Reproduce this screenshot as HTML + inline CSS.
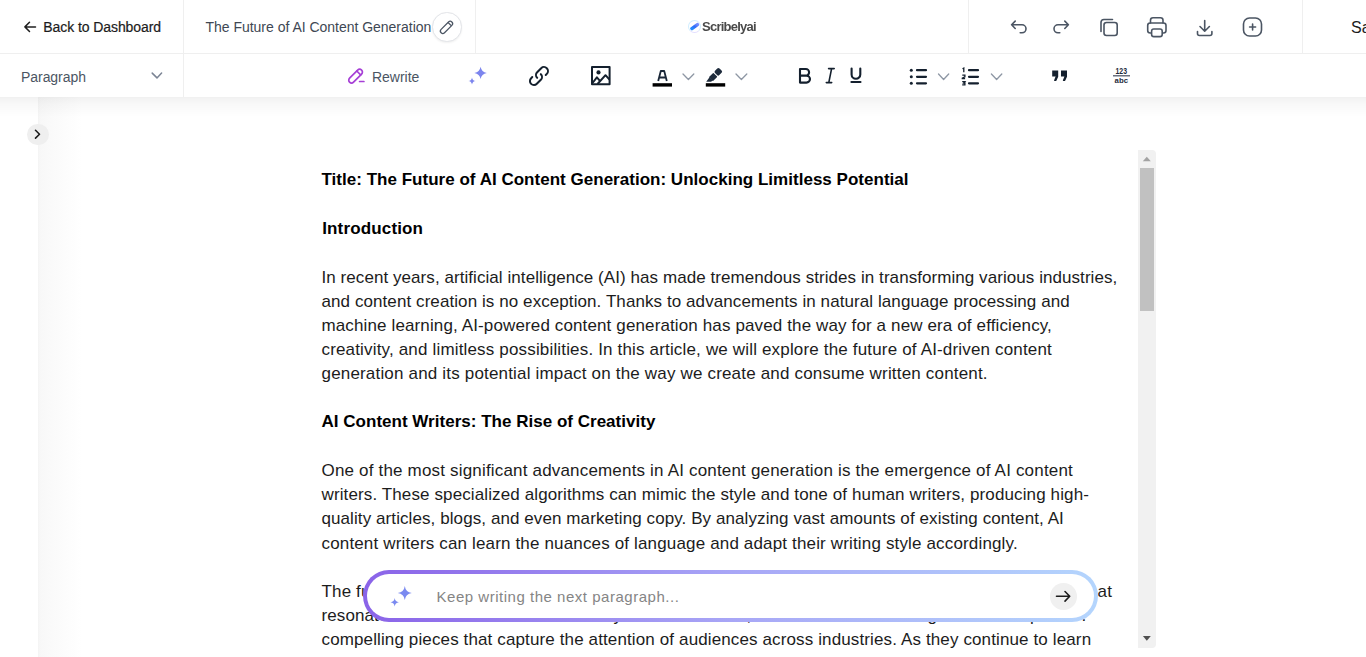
<!DOCTYPE html>
<html><head><meta charset="utf-8">
<style>
*{box-sizing:border-box;margin:0;padding:0}
html,body{width:1366px;height:657px;overflow:hidden;background:#fff;font-family:"Liberation Sans",sans-serif}
.abs{position:absolute}
.vl{position:absolute;width:1px;background:#efefef}
.hl{position:absolute;height:1px;background:#efefef}
.ui{position:absolute;white-space:nowrap;line-height:1}
svg{position:absolute;overflow:visible}
.doc{position:absolute;left:321.5px;top:0;white-space:nowrap;font-size:17px;color:#1c1c1c;line-height:24.2px}
.doc div{position:absolute;left:0;white-space:nowrap}
.doc .b{font-weight:700;color:#000}
</style></head><body>

<!-- toolbar shadow -->
<!-- sidebar shadow -->
<div class="abs" style="left:38px;top:97px;width:44px;height:560px;background:linear-gradient(90deg,#f4f4f4,#f8f8f8 6%,#fafafa 30%,#fcfcfc 60%,#fff)"></div>
<div class="abs" style="left:0;top:97px;width:1366px;height:20px;background:linear-gradient(rgba(0,0,0,0.06),rgba(0,0,0,0.045) 12%,rgba(0,0,0,0.025) 40%,rgba(0,0,0,0.01) 70%,rgba(0,0,0,0))"></div>


<!-- header borders -->
<div class="hl" style="left:0;top:53px;width:1366px"></div>
<div class="vl" style="left:183px;top:0;height:97px"></div>
<div class="vl" style="left:475px;top:0;height:53px"></div>
<div class="vl" style="left:968px;top:0;height:53px"></div>
<div class="vl" style="left:1302px;top:0;height:53px"></div>

<!-- back -->
<svg style="left:0;top:0" width="1" height="1"><path d="M35.5 26.9H25M29.5 22.3l-4.6 4.6 4.6 4.6" fill="none" stroke="#1f1f1f" stroke-width="1.5" stroke-linecap="round" stroke-linejoin="round"/></svg>
<div class="ui" style="left:43.3px;top:20.2px;font-size:14px;color:#1c1c1c;letter-spacing:-0.08px;-webkit-text-stroke:0.2px #1c1c1c">Back to Dashboard</div>

<!-- title -->
<div class="ui" style="left:205.5px;top:19.5px;font-size:14px;color:#404854;letter-spacing:-0.02px">The Future of AI Content Generation</div>
<div class="abs" style="left:432.2px;top:12.2px;width:29.4px;height:29.4px;border-radius:50%;border:1px solid #e2e4e8;background:#fff;box-shadow:0 1px 2px rgba(0,0,0,0.06)"></div>
<svg style="left:0;top:0" width="1" height="1"><g transform="translate(446.5,27.4) rotate(-45)" fill="none" stroke="#4b5563" stroke-width="1.25"><rect x="-7.6" y="-2.4" width="15.2" height="4.8" rx="2.4"/><path d="M4.6 -2.4v4.8"/></g></svg>

<!-- logo -->
<div class="abs" style="left:687.6px;top:20px;width:13.2px;height:13.2px;border-radius:50%;border:1.2px solid rgba(150,215,255,0.45);border-bottom-color:rgba(200,190,255,0.5);filter:blur(0.35px)"></div>
<svg style="left:0;top:0" width="1" height="1"><defs><linearGradient id="lg" x1="0" y1="1" x2="1" y2="0"><stop offset="0" stop-color="#1f8dff"/><stop offset="0.5" stop-color="#2f6cf6"/><stop offset="1" stop-color="#6f8cff"/></linearGradient></defs><path d="M691.9 28.6L697.4 24.6" stroke="url(#lg)" stroke-width="3.4" stroke-linecap="round" style="filter:blur(0.35px)"/></svg>
<div class="ui" style="left:702px;top:20px;font-size:13px;font-weight:700;color:#4a4a4a;letter-spacing:-0.75px;filter:blur(0.25px)">Scribelyai</div>

<!-- right icons -->
<svg style="left:0;top:0" width="1" height="1" fill="none" stroke="#4b5563" stroke-width="1.6" stroke-linecap="round" stroke-linejoin="round">
 <path d="M1015.2 21.1l-3.6 3.7 3.6 3.7M1011.6 24.8h10.4a4 4 0 0 1 0 8h-1.8"/>
 <path d="M1064.8 21.1l3.6 3.7-3.6 3.7M1068.4 24.8h-10.4a4 4 0 0 0 0 8h1.8"/>
 <rect x="1104" y="22.5" width="13.2" height="13" rx="2.5"/>
 <path d="M1101 31.5v-9a3 3 0 0 1 3-3h8.5"/>
 <path d="M1150.5 23v-2.8a2.5 2.5 0 0 1 2.5-2.5h7.5a2.5 2.5 0 0 1 2.5 2.5V23"/>
 <path d="M1151 33h-0.8a2.5 2.5 0 0 1-2.5-2.5v-5a2.5 2.5 0 0 1 2.5-2.5h13.3a2.5 2.5 0 0 1 2.5 2.5v5a2.5 2.5 0 0 1-2.5 2.5H1163"/>
 <rect x="1151.6" y="29" width="10.6" height="7.6" rx="2.2"/>
 <path d="M1204.7 20.5v10.5M1200 26.5l4.7 4.7 4.7-4.7M1197.5 31.5v2a2 2 0 0 0 2 2h10.4a2 2 0 0 0 2-2v-2"/>
 <rect x="1243.5" y="18" width="18" height="18" rx="6"/>
 <path d="M1252.6 24v6M1249.6 27h6"/>
</svg>
<div class="ui" style="left:1351px;top:20px;font-size:16px;color:#1c1c1c">Save</div>

<!-- row 2 -->
<div class="ui" style="left:21px;top:69.5px;font-size:14px;color:#4b5563;letter-spacing:-0.05px">Paragraph</div>
<svg style="left:0;top:0" width="1" height="1"><path d="M152.2 73.1l4.8 4.8 4.6-4.8" fill="none" stroke="#7b8494" stroke-width="1.5" stroke-linecap="round" stroke-linejoin="round"/></svg>

<!-- rewrite -->
<svg style="left:0;top:0" width="1" height="1" fill="none" stroke="#a63fd6" stroke-width="1.7" stroke-linecap="round" stroke-linejoin="round">
 <g transform="translate(355.6,76.1) rotate(-45)"><rect x="-8.5" y="-2.8" width="17" height="5.6" rx="2.8"/><path d="M4.4 -2.8v5.6"/></g>
 <path d="M359.6 81.5h4.3"/>
</svg>
<div class="ui" style="left:372px;top:70px;font-size:14px;color:#4b5563;letter-spacing:-0.03px">Rewrite</div>

<!-- sparkles -->
<svg style="left:0;top:0" width="1" height="1" fill="#7c85ee">
 <path d="M480.6 66.8Q481.5 72 486.8 72.9Q481.5 73.8 480.6 79Q479.7 73.8 474.4 72.9Q479.7 72 480.6 66.8z"/>
 <path d="M472 77.4Q472.5 80.6 475.6 81Q472.5 81.4 472 84.6Q471.5 81.4 468.4 81Q471.5 80.6 472 77.4z"/>
</svg>

<!-- link -->
<svg style="left:527.3px;top:63.6px" width="24" height="24" viewBox="0 0 24 24" fill="none" stroke="#14202e" stroke-width="2" stroke-linecap="round" stroke-linejoin="round">
 <path transform="matrix(0 -1 -1 0 24 24)" d="M13.828 10.172a4 4 0 0 0-5.656 0l-4 4a4 4 0 1 0 5.656 5.656l1.102-1.101m-.758-4.899a4 4 0 0 0 5.656 0l4-4a4 4 0 0 0-5.656-5.656l-1.1 1.1"/>
</svg>

<!-- image -->
<svg style="left:0;top:0" width="1" height="1" fill="none" stroke="#14202e" stroke-width="2" stroke-linejoin="round">
 <rect x="592" y="67" width="17.6" height="17.3"/>
 <circle cx="598.5" cy="72.4" r="2.1" fill="#14202e" stroke="none"/>
 <path d="M592.5 83l4.4-5.7 2.6 3M597.5 84l8-8.8 4 4.5"/>
</svg>

<!-- font color -->
<svg style="left:0;top:0" width="1" height="1">
 <path d="M658.2 81l2.6-10h3.4l2.6 10M659.7 77.5h5.8" fill="none" stroke="#1a2738" stroke-width="1.8" stroke-linejoin="round"/>
 <rect x="652.6" y="83.2" width="19.4" height="3.4" fill="#000"/>
 <path d="M683 74l5.4 5.5 5.4-5.5" fill="none" stroke="#8e97a4" stroke-width="1.3" stroke-linecap="round" stroke-linejoin="round"/>
</svg>
<!-- highlighter -->
<svg style="left:0;top:0" width="1" height="1">
 <g transform="translate(713.1,76.9) rotate(-45)" fill="#1e2b3c">
  <rect x="4.1" y="-3" width="6.4" height="6.1" rx="1.6"/>
  <rect x="-3.2" y="-2.8" width="6.3" height="5.7" rx="0.6"/>
  <path d="M-2.8 -2.3L-8.2 -1.5L-4.8 2.1H-2.8z"/>
 </g>
 <rect x="705.8" y="83.2" width="19.4" height="3.4" fill="#000"/>
 <path d="M736 74l5.4 5.5 5.4-5.5" fill="none" stroke="#8e97a4" stroke-width="1.3" stroke-linecap="round" stroke-linejoin="round"/>
</svg>

<!-- B I U -->
<svg style="left:0;top:0" width="1" height="1" fill="none" stroke="#14202e" stroke-width="2.1" stroke-linejoin="round" stroke-linecap="round">
 <path d="M800 69h5.8a3.3 3.3 0 0 1 0 6.6H800zM800 75.6h6.5a3.5 3.5 0 0 1 0 7H800z"/>
 <path d="M828.6 68.6h5.6M826.3 82.6h5.4M831.6 68.6l-2.8 14" stroke-width="1.6"/>
 <path d="M851.6 68.6v5.8a4.3 4.3 0 0 0 8.7 0v-5.8M851.4 82h9.1"/>
</svg>

<!-- lists -->
<svg style="left:0;top:0" width="1" height="1">
 <g fill="#14202e"><circle cx="911.3" cy="70.2" r="1.5"/><circle cx="911.3" cy="76.8" r="1.5"/><circle cx="911.3" cy="83.3" r="1.5"/></g>
 <g stroke="#14202e" stroke-width="2.2" stroke-linecap="round"><path d="M917 70.2h9M917 76.8h9M917 83.3h9"/></g>
 <path d="M938.5 74l5.1 5.5 5.1-5.5" fill="none" stroke="#8e97a4" stroke-width="1.3" stroke-linecap="round" stroke-linejoin="round"/>
 <g stroke="#14202e" stroke-width="2.2" stroke-linecap="round"><path d="M969 70.2h9M969 76.8h9M969 83.3h9"/></g>
 <g fill="none" stroke="#14202e" stroke-width="1.3"><path d="M962.5 68.8l1.3-0.7v4.2"/><path d="M962.3 75.2h2.6v1.6l-2.6 1.4v0.5h2.8"/><path d="M962.2 81.6h2.7l-1.2 1.4h1.2v1.8h-2.7"/></g>
 <path d="M991.4 74l5.2 5.5 5.2-5.5" fill="none" stroke="#8e97a4" stroke-width="1.3" stroke-linecap="round" stroke-linejoin="round"/>
</svg>

<!-- quote -->
<svg style="left:0;top:0" width="1" height="1" fill="#14202e">
 <path d="M1052.2 70.6H1058.2V76.8L1056.5 80.4Q1056.2 81 1055.5 81H1054.6Q1053.8 81 1054.1 80.3L1055.6 76.6H1052.2Z"/>
 <path d="M1061 70.6H1067V76.8L1065.3 80.4Q1065 81 1064.3 81H1063.4Q1062.6 81 1062.9 80.3L1064.4 76.6H1061Z"/>
</svg>
<svg style="left:0;top:0" width="1" height="1" font-family="Liberation Sans" font-weight="700" fill="#1e2b3c">
 <text x="1115.5" y="73.7" font-size="8.3" textLength="11.5" lengthAdjust="spacingAndGlyphs">123</text>
 <rect x="1113" y="75" width="17" height="1.5" fill="#6b7280"/>
 <text x="1114.6" y="83.4" font-size="7.6" textLength="13.4" lengthAdjust="spacingAndGlyphs">abc</text>
</svg>

<!-- sidebar toggle -->
<div class="abs" style="left:27px;top:123.5px;width:21.5px;height:21.5px;border-radius:50%;background:#efefef"></div>
<svg style="left:0;top:0" width="1" height="1"><path d="M35.5 130.3l4 3.9-4 3.9" fill="none" stroke="#1c1c1c" stroke-width="1.6" stroke-linecap="round" stroke-linejoin="round"/></svg>

<!-- document -->
<div class="doc">
 <div class="b" style="top:168px;letter-spacing:0.02px">Title: The Future of AI Content Generation: Unlocking Limitless Potential</div>
 <div class="b" style="top:217px;left:0.7px;letter-spacing:0.15px">Introduction</div>
 <div style="top:266px;letter-spacing:0.063px">In recent years, artificial intelligence (AI) has made tremendous strides in transforming various industries,</div>
 <div style="top:290px;letter-spacing:0.081px">and content creation is no exception. Thanks to advancements in natural language processing and</div>
 <div style="top:314px;letter-spacing:0.127px">machine learning, AI-powered content generation has paved the way for a new era of efficiency,</div>
 <div style="top:338px;letter-spacing:0.166px">creativity, and limitless possibilities. In this article, we will explore the future of AI-driven content</div>
 <div style="top:362px;letter-spacing:0.178px">generation and its potential impact on the way we create and consume written content.</div>
 <div class="b" style="top:410px;letter-spacing:0.018px">AI Content Writers: The Rise of Creativity</div>
 <div style="top:459px;letter-spacing:0.179px">One of the most significant advancements in AI content generation is the emergence of AI content</div>
 <div style="top:483px;letter-spacing:0.119px">writers. These specialized algorithms can mimic the style and tone of human writers, producing high-</div>
 <div style="top:507px;letter-spacing:0.086px">quality articles, blogs, and even marketing copy. By analyzing vast amounts of existing content, AI</div>
 <div style="top:532px;letter-spacing:0.156px">content writers can learn the nuances of language and adapt their writing style accordingly.</div>
 <div style="top:580px;letter-spacing:0.149px">The future of AI content writers is incredibly promising, as they evolve to produce engaging content that</div>
 <div style="top:604px;letter-spacing:0.1px">resonates with readers</div>
 <div style="top:604px;left:292px">y</div>
 <div style="top:604px;left:425px">,</div>
 <div style="top:604px;left:606px">g</div>
 <div style="top:604px;left:708.5px">p</div>
 <div style="top:604px;left:760px">.</div>
 <div style="top:628px;letter-spacing:0.125px">compelling pieces that capture the attention of audiences across industries. As they continue to learn</div>
</div>

<!-- scrollbar -->
<div class="abs" style="left:1138px;top:149.5px;width:18px;height:498px;background:#f1f1f1;border-radius:0 4px 4px 0"></div>
<div class="abs" style="left:1140px;top:168px;width:14px;height:142.5px;background:#c1c1c1"></div>
<svg style="left:0;top:0" width="1" height="1"><path d="M1142.8 161.3l4-4.6 4 4.6z" fill="#a3a3a3"/><path d="M1142.9 636.1h7.9l-3.95 4.7z" fill="#505050"/></svg>

<!-- input box -->
<div class="abs" style="left:363px;top:570px;width:735px;height:52px;border-radius:26px;background:linear-gradient(90deg,#8a63e8,#a8a6f6 50%,#b4d5fd)"></div>
<div class="abs" style="left:367px;top:574px;width:727px;height:44px;border-radius:22px;background:#fff"></div>
<svg style="left:0;top:0" width="1" height="1" fill="#7b8af0">
 <path d="M404.8 586Q405.6 592.2 411.8 593Q405.6 593.8 404.8 600Q404 593.8 397.8 593Q404 592.2 404.8 586z"/>
 <path d="M394.7 598Q395.2 601.8 398.9 602.3Q395.2 602.8 394.7 606.5Q394.2 602.8 390.5 602.3Q394.2 601.8 394.7 598z"/>
</svg>
<div class="ui" style="left:436.5px;top:589px;font-size:15px;color:#858585;letter-spacing:0.52px">Keep writing the next paragraph...</div>
<div class="abs" style="left:1050px;top:583px;width:26.5px;height:26.5px;border-radius:50%;background:#f0f0f0"></div>
<svg style="left:0;top:0" width="1" height="1"><path d="M1056.5 596.3h13M1065 591.5l4.7 4.8-4.7 4.8" fill="none" stroke="#1c1c1c" stroke-width="1.6" stroke-linecap="round" stroke-linejoin="round"/></svg>

</body></html>
